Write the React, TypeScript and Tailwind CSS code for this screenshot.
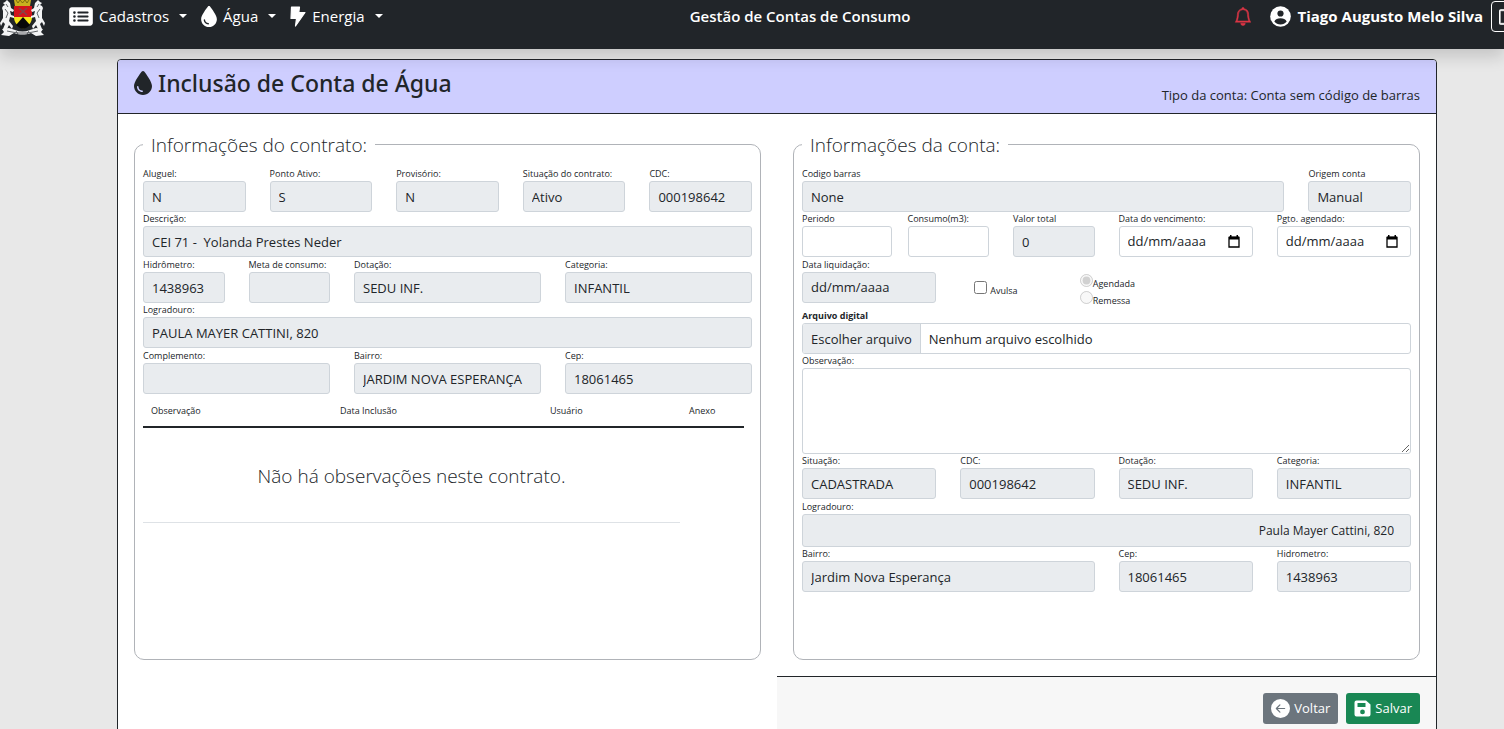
import type { ReactNode } from "react";
import { FaDroplet, FaRectangleList } from "react-icons/fa6";
import { BsArrowLeftCircleFill, BsBell, BsBoxArrowRight } from "react-icons/bs";

const control =
  "block h-[31px] w-full min-w-0 rounded-[3px] border border-[#ced4da] px-2 text-[13px] leading-[21px] text-[#212529]";

interface FieldProps {
  id: string;
  label: string;
  value?: string;
  className?: string;
  editable?: boolean;
}

function Field({ id, label, value = "", className = "", editable = false }: FieldProps) {
  return (
    <div className={className}>
      <Label htmlFor={id}>{label}</Label>
      <input
        id={id}
        type="text"
        defaultValue={value}
        readOnly={!editable}
        className={`${control} ${editable ? "bg-white" : "bg-[#e9ecef]"}`}
      />
    </div>
  );
}

function Label({ htmlFor, children, bold = false }: { htmlFor: string; children: ReactNode; bold?: boolean }) {
  return (
    <label
      htmlFor={htmlFor}
      className={`block h-[14px] text-[9px] leading-[14px] whitespace-nowrap ${bold ? "font-bold" : ""}`}
    >
      {children}
    </label>
  );
}

interface DateFieldProps {
  id: string;
  label: string;
  className?: string;
  disabled?: boolean;
}

function DateField({ id, label, className = "", disabled = false }: DateFieldProps) {
  return (
    <div className={className}>
      <Label htmlFor={id}>{label}</Label>
      <div className={`${control} ${disabled ? "bg-[#e9ecef]" : "bg-white"}`}>
        <div className="flex h-full items-center justify-between">
          <input
            id={id}
            type="text"
            placeholder="dd/mm/aaaa"
            readOnly={disabled}
            className="w-full min-w-0 bg-transparent placeholder:text-[#212529] placeholder:opacity-100"
          />
          {!disabled && (
            <button type="button" aria-label="Abrir calendário" className="mr-1 shrink-0">
              <svg className="h-[13px] w-3" viewBox="0 0 12 13" fill="none">
                <path d="M1 2.5h10v9.5H1z" stroke="#000" strokeWidth="1.3" />
                <path d="M1 1.5h10v3H1zM2 0h1.5v2H2zM8.5 0H10v2H8.5z" fill="#000" />
              </svg>
            </button>
          )}
        </div>
      </div>
    </div>
  );
}

function Caret() {
  return <span className="ml-1 border-x-4 border-t-4 border-x-transparent border-t-current" />;
}

function Crest() {
  return (
    <svg className="h-9 w-[45px]" viewBox="0 0 45 36">
      <path d="M14 0h17l-1 6H15z" fill="#c9b01e" />
      <path d="M16 0l2 3 2-3 2.5 3L25 0l2 3 2-3" stroke="#6b5c0a" strokeWidth="0.8" fill="none" />
      <path d="M14 6h18v11H14z" fill="#d3141b" />
      <path d="M19 8l8 7m0-7l-8 7" stroke="#7c4a4c" strokeWidth="1.3" />
      <path d="M14 17h18c0 6-4 9-9 12-5-3-9-6-9-12z" fill="#f5e51b" />
      <path d="M16 25l7-8 7 8c-2 2-4 3-7 4-3-1-5-2-7-4z" fill="#080808" />
      <g fill="#f3f4f5">
        <path d="M7 0l3 3 1 5 3 2-1 2-3-1 1 4 3 1v2l-4-1-1 4 4 5-1 3-3-4-2 4H3l2-5-2-2-2 4-1-3 3-5V11L2 8l1-2 2-1-2-2 2-1z" />
        <path d="M38 0l-3 3-1 5-3 2 1 2 3-1-1 4-3 1v2l4-1 1 4-4 5 1 3 3-4 2 4h4l-2-5 2-2 2 4 1-3-3-5v-7l1-3-1-2-2-1 2-2-2-1z" />
        <path d="M2 29l7-1 6 2c5 2 10 2 15 0l6-2 7 1-2 3 3 3-8 1-5-3c-6 2-11 2-17 0l-5 3-8-1 3-3z" />
      </g>
      <path
        d="M5 9l3 4-2 5m34-9l-3 4 2 5M7 31l5 1 6 1h9l6-1 5-1M16 31l2 3m11-3l-2 3M6 4l2 3m31-3l-2 3"
        stroke="#3c4044"
        strokeWidth="0.8"
        fill="none"
      />
    </svg>
  );
}

function Bolt() {
  return (
    <svg className="h-[21px] w-4" viewBox="0 0 16 21">
      <path
        d="M1.5 1h8L8.8 6.500H15L5.500 20l1-7.500H1z"
        fill="currentColor"
        stroke="currentColor"
        strokeWidth="1.2"
        strokeLinejoin="round"
      />
    </svg>
  );
}

function Navbar() {
  return (
    <header className="relative z-10 flex h-[49px] items-start overflow-x-clip bg-[#212529] text-[15px] text-white shadow-[0_8px_16px_rgba(0,0,0,0.15)]">
      <a href="#inicio" aria-label="Início" className="shrink-0">
        <Crest />
      </a>
      <nav className="ml-6 flex h-8 shrink-0 items-center gap-[14px]">
        <button type="button" className="flex items-center gap-[6px]">
          <FaRectangleList className="h-[21px] w-6" />
          Cadastros
          <Caret />
        </button>
        <button type="button" className="flex items-center gap-[6px]">
          <FaDroplet className="h-[21px] w-4" />
          Água
          <Caret />
        </button>
        <button type="button" className="flex items-center gap-[6px]">
          <Bolt />
          Energia
          <Caret />
        </button>
      </nav>
      <p className="h-8 flex-1 pr-4 text-center leading-8 font-semibold whitespace-nowrap">
        Gestão de Contas de Consumo
      </p>
      <div className="-mr-[30px] flex h-8 shrink-0 items-center">
        <button type="button" aria-label="Notificações" className="mr-[18px] text-[#dc3545]">
          <BsBell className="h-[19px] w-[18px] stroke-[0.5]" />
        </button>
        <svg className="mr-[7px] h-[21px] w-[21px]" viewBox="0 0 21 21">
          <circle cx="10.5" cy="10.5" r="10.3" fill="#fff" />
          <circle cx="10.5" cy="7.5" r="3.1" fill="#212529" />
          <path d="M4.3 15.5c1-2.300 3.500-3.200 6.200-3.200s5.200.9 6.200 3.200c-1.500 1.900-3.700 3-6.200 3s-4.700-1.100-6.200-3z" fill="#212529" />
        </svg>
        <span className="mr-2 font-bold whitespace-nowrap">Tiago Augusto Melo Silva</span>
        <button type="button" aria-label="Sair" className="mt-px flex h-[31px] w-[43px] items-center rounded-[4px] border border-white px-[7px]">
          <BsBoxArrowRight className="h-5 w-5 shrink-0 stroke-[0.5]" />
        </button>
      </div>
    </header>
  );
}

function Group({ title, children }: { title: string; children: ReactNode }) {
  return (
    <fieldset className="min-w-0 flex-1 rounded-[10px] border border-[#b0b3b8] px-2 pb-[67px]">
      <legend className="px-2 pt-[2px] text-[19px] leading-[26px] font-light">{title}</legend>
      {children}
    </fieldset>
  );
}

function ContractInfo() {
  return (
    <Group title="Informações do contrato:">
      <div className="mt-[9px] grid grid-cols-5 gap-x-6">
        <Field id="aluguel" label="Aluguel:" value="N" />
        <Field id="ponto" label="Ponto Ativo:" value="S" />
        <Field id="provisorio" label="Provisório:" value="N" />
        <Field id="situacao-contrato" label="Situação do contrato:" value="Ativo" />
        <Field id="cdc-contrato" label="CDC:" value="000198642" />
      </div>
      <div className="grid grid-cols-12 gap-x-6">
        <Field id="descricao" label="Descrição:" value="CEI 71 -  Yolanda Prestes Neder" className="col-span-12" />
      </div>
      <div className="mt-px grid grid-cols-12 gap-x-6">
        <Field id="hidrometro" label="Hidrômetro:" value="1438963" className="col-span-2" />
        <Field id="meta" label="Meta de consumo:" className="col-span-2" />
        <Field id="dotacao" label="Dotação:" value="SEDU INF." className="col-span-4" />
        <Field id="categoria" label="Categoria:" value="INFANTIL" className="col-span-4" />
        <Field id="logradouro" label="Logradouro:" value="PAULA MAYER CATTINI, 820" className="col-span-12" />
      </div>
      <div className="mt-px grid grid-cols-12 gap-x-6">
        <Field id="complemento" label="Complemento:" className="col-span-4" />
        <Field id="bairro" label="Bairro:" value="JARDIM NOVA ESPERANÇA" className="col-span-4" />
        <Field id="cep" label="Cep:" value="18061465" className="col-span-4" />
      </div>
      <div className="mt-2 pr-2">
        <table className="w-full table-fixed text-left">
          <thead>
            <tr className="border-b-2 border-[#212529] text-[9px] leading-4 [&>th]:px-2 [&>th]:pt-px [&>th]:pb-[7px] [&>th]:font-normal">
              <th className="w-[189px]">Observação</th>
              <th className="w-[210px]">Data Inclusão</th>
              <th className="w-[139px]">Usuário</th>
              <th>Anexo</th>
            </tr>
          </thead>
          <tbody>
            <tr>
              <td colSpan={4} className="pr-16">
                <p className="border-b border-[#dee2e6] pt-[33px] pb-[31px] text-center text-[19px] leading-[30px] font-light">
                  Não há observações neste contrato.
                </p>
              </td>
            </tr>
          </tbody>
        </table>
      </div>
    </Group>
  );
}

function BillInfo() {
  return (
    <Group title="Informações da conta:">
      <div className="mt-[9px] grid grid-cols-5 gap-x-6">
        <Field id="codigo" label="Codigo barras" value="None" className="col-span-4" />
        <Field id="origem" label="Origem conta" value="Manual" />
      </div>
      <div className="grid grid-cols-12 gap-x-6">
        <Field id="periodo" label="Periodo" editable className="col-span-2 -mr-2" />
        <Field id="consumo" label="Consumo(m3):" editable className="col-span-2" />
        <Field id="valor" label="Valor total" value="0" className="col-span-2" />
        <DateField id="vencimento" label="Data do vencimento:" className="col-span-3" />
        <DateField id="agendado" label="Pgto. agendado:" className="col-span-3" />
      </div>
      <div className="mt-px grid grid-cols-12 gap-x-6">
        <DateField id="liquidacao" label="Data liquidação:" disabled className="col-span-3" />
        <label className="col-span-2 ml-[14px] flex items-center gap-[3px] pt-5 text-[9px]">
          <input type="checkbox" className="-mt-[6px] h-[13px] w-[13px]" />
          Avulsa
        </label>
        <div className="col-span-5 col-start-6 -mb-[6px] ml-[14px] flex flex-col justify-end text-[9px] leading-[17px]">
          <label className="flex items-center">
            <input type="radio" name="envio" defaultChecked disabled className="-mt-[6px] h-[13px] w-[13px]" />
            Agendada
          </label>
          <label className="flex items-center">
            <input type="radio" name="envio" disabled className="-mt-[6px] h-[13px] w-[13px]" />
            Remessa
          </label>
        </div>
      </div>
      <div className="mt-[6px] grid grid-cols-12 gap-x-6">
        <div className="col-span-12">
          <Label htmlFor="arquivo" bold>
            Arquivo digital
          </Label>
          <input id="arquivo" type="file" className="sr-only" />
          <label
            htmlFor="arquivo"
            className="flex h-[31px] overflow-hidden rounded-[3px] border border-[#ced4da] bg-white text-[13px] leading-[30px]"
          >
            <span className="border-r border-[#ced4da] bg-[#e9ecef] px-2">Escolher arquivo</span>
            <span className="px-2">Nenhum arquivo escolhido</span>
          </label>
        </div>
        <div className="col-span-12">
          <Label htmlFor="observacao">Observação:</Label>
          <textarea
            id="observacao"
            className="block h-[86px] w-full rounded-[3px] border border-[#ced4da] bg-white px-2 py-1 text-[13px]"
          />
        </div>
        <Field id="situacao" label="Situação:" value="CADASTRADA" className="col-span-3" />
        <Field id="cdc" label="CDC:" value="000198642" className="col-span-3" />
        <Field id="dotacao-conta" label="Dotação:" value="SEDU INF." className="col-span-3" />
        <Field id="categoria-conta" label="Categoria:" value="INFANTIL" className="col-span-3" />
      </div>
      <div className="mt-px">
        <Label htmlFor="logradouro-conta">Logradouro:</Label>
        <input
          id="logradouro-conta"
          type="text"
          readOnly
          defaultValue="Paula Mayer Cattini, 820"
          className="block h-[33px] w-full rounded-[3px] border border-[#ced4da] bg-[#e9ecef] px-4 text-right text-[12px]"
        />
      </div>
      <div className="grid grid-cols-12 gap-x-6">
        <Field id="bairro-conta" label="Bairro:" value="Jardim Nova Esperança" className="col-span-6" />
        <Field id="cep-conta" label="Cep:" value="18061465" className="col-span-3" />
        <Field id="hidrometro-conta" label="Hidrometro:" value="1438963" className="col-span-3" />
      </div>
    </Group>
  );
}

export default function App() {
  return (
    <div className="h-screen overflow-hidden bg-[#e8e8e8] font-['Open_Sans',sans-serif] text-[#212529]">
      <Navbar />
      <main className="pt-[10px] pl-[50px]">
        <form className="mx-auto max-w-[1320px] rounded-[4px] border border-[#212529] bg-white">
          <div className="flex items-end justify-between rounded-t-[3px] border-b border-[#212529] bg-[#ceceff] px-4 pt-2 pb-[7px]">
            <h1 className="flex items-center gap-[6px] pb-2 font-['Noto_Sans',sans-serif] text-[23px] leading-[30px] font-medium">
              <FaDroplet className="h-6 w-[18px]" />
              Inclusão de Conta de Água
            </h1>
            <span className="text-[13px] leading-[21px]">Tipo da conta: Conta sem código de barras</span>
          </div>
          <div className="flex gap-8 p-4">
            <ContractInfo />
            <BillInfo />
          </div>
          <div className="ml-auto flex w-1/2 justify-end gap-2 rounded-br-[3px] border-t border-[#212529] bg-[#f7f7f7] p-4 pb-8 text-[13px] text-white">
            <button type="button" className="flex h-[31px] items-center gap-1 rounded-[3px] bg-[#6c757d] px-2">
              <BsArrowLeftCircleFill className="h-[19px] w-[19px]" />
              Voltar
            </button>
            <button type="submit" className="flex h-[31px] items-center gap-1 rounded-[3px] bg-[#198754] px-2">
              <svg className="h-[17px] w-[17px]" viewBox="0 0 16 17">
                <path
                  fillRule="evenodd"
                  fill="#fff"
                  d="M2 .5h9.500L16 4.500V14.500a2 2 0 0 1-2 2H2a2 2 0 0 1-2-2v-12a2 2 0 0 1 2-2zM3 3v4h8V3zM8 9.500a2.400 2.400 0 1 0 0 4.800a2.400 2.400 0 1 0 0-4.800z"
                />
              </svg>
              Salvar
            </button>
          </div>
        </form>
      </main>
    </div>
  );
}
